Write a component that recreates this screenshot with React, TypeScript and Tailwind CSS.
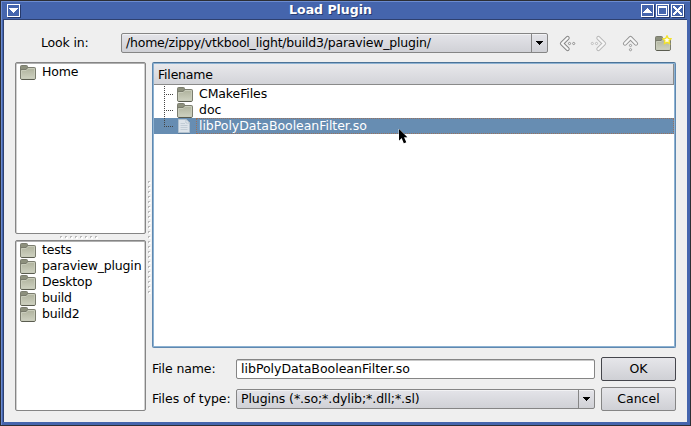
import type { ReactNode } from "react";

function Folder({ id }: { id: string }) {
  return (
    <svg width="16" height="16" viewBox="0 0 16 16" className="block shrink-0">
      <defs>
        <linearGradient id={id} x1="0" y1="0" x2="0" y2="1">
          <stop offset="0" stopColor="#b0b39e" />
          <stop offset="1" stopColor="#cdd0bf" />
        </linearGradient>
      </defs>
      <path d="M.5 14V2.5q0-1 1-1h5q1 0 1 1v1h7q1 0 1 1V14q0 1.4-1 1.4h-13q-1 0-1-1.4z" fill="#8d907d" stroke="#7b7d6f" />
      <path d="M1.5 6.5h4.8l1.5-2h6.7v10h-13z" fill={`url(#${id})`} stroke="#c9ccbb" />
      <path d="M1 5.5h5L7.6 3.5" fill="none" stroke="#747668" strokeWidth=".8" />
      <path d="M1.5 15.5h13" stroke="#5a5c50" />
    </svg>
  );
}

function FileIcon() {
  return (
    <svg width="16" height="16" viewBox="0 0 16 16" className="block shrink-0">
      <path d="M1.5 1.5h7.5l3.5 3.5v9.5h-11z" fill="#dde4ea" stroke="#b3c2cf" />
      <path d="M9 1.5V5h3.5z" fill="#f7f9fa" stroke="#b9c6d0" />
      <path d="M3.5 5.5H8M3.5 7.5h7M3.5 9.5h7M3.5 11.5h7" stroke="#c2cdd6" />
      <path d="M1 15.5h12" stroke="#5b7c9c" />
    </svg>
  );
}

function TitleButton({ children }: { children: ReactNode }) {
  return (
    <svg width="14" height="14" viewBox="0 0 14 14" shapeRendering="crispEdges" className="block">
      <path d="M1 13.5h12.5V1" fill="none" stroke="#26396b" />
      <rect x=".5" y=".5" width="12" height="12" fill="#4565ad" stroke="#fff" />
      {children}
    </svg>
  );
}

function NavArrow({ turn, color }: { turn: string; color: string }) {
  return (
    <svg width="17" height="17" viewBox="0 0 17 17" className={`block ${turn}`}>
      <path d="M8.6 3L3 8.5 8.6 14" fill="none" stroke={color} strokeWidth="4.2" strokeLinecap="round" strokeLinejoin="round" />
      <path d="M8.6 3L3 8.5 8.6 14" fill="none" stroke="#f6f6f6" strokeWidth="2.3" strokeLinecap="round" strokeLinejoin="round" />
      <circle cx="10.5" cy="8.5" r="1.1" fill="#f4f4f4" stroke={color} strokeWidth=".9" />
      <circle cx="14.7" cy="8.5" r="1.1" fill="#f4f4f4" stroke={color} strokeWidth=".9" />
    </svg>
  );
}

function Combo({ children, className }: { children: ReactNode; className: string }) {
  return (
    <div className={`flex h-5 rounded-[2px] border border-[#858585] bg-linear-to-b from-[#e4e4e9] to-[#d0d1d6] shadow-[inset_0_1px_0_#f2f2f4] ${className}`}>
      <span className="flex-1 pl-1 leading-[18px]">{children}</span>
      <span className="flex w-4 items-center justify-center border-l border-[#858585]">
        <svg width="7" height="4" viewBox="0 0 7 4" shapeRendering="crispEdges">
          <path d="M0 0h7v1H6v1H5v1H4v1H3V3H2V2H1V1H0z" />
        </svg>
      </span>
    </div>
  );
}

function Dots({ vertical, count }: { vertical?: boolean; count: number }) {
  return (
    <div className={`flex items-center justify-center gap-[3px] ${vertical ? "flex-col" : ""}`}>
      {Array.from({ length: count }, (_, i) => (
        <i key={i} className="block size-[2px] border-t border-l border-[#b9b9b9] bg-white shadow-[1px_1px_0_#fff]" />
      ))}
    </div>
  );
}

function Place({ name }: { name: string }) {
  return (
    <div className="flex h-4 items-center gap-[6px] whitespace-nowrap">
      <Folder id={`place-${name}`} />
      <span className="tracking-[-0.18px]">{name}</span>
    </div>
  );
}

function Branch({ last, children }: { last?: boolean; children: ReactNode }) {
  return (
    <>
      <svg width="23" height="16" viewBox="0 0 23 16" shapeRendering="crispEdges" className="shrink-0">
        <path d={last ? "M10.5 0v8" : "M10.5 0v16"} stroke="#444" strokeDasharray="1 1" />
        <path d="M10 8.5h10" stroke="#444" strokeDasharray="1 1" />
      </svg>
      {children}
    </>
  );
}

export default function App() {
  return (
    <div className="flex h-[426px] w-[691px] cursor-default flex-col overflow-hidden border border-[#2c2e34] bg-[#4565ad] font-['DejaVu_Sans',sans-serif] text-[12.5px] leading-4 text-black shadow-[inset_1px_1px_0_#6b8bd0]">
      <header className="flex h-[18px] shrink-0 items-center pr-[5px] pl-[6px]">
        <div className="mt-[2px] w-[48px]">
          <TitleButton><path d="M2 4h9v1h-1v1H9v1H8v1H7v1H6V8H5V7H4V6H3V5H2z" fill="#fff" /></TitleButton>
        </div>
        <h1 className="flex-1 pr-[33px] text-center text-[12.5px] leading-[18px] font-bold text-white [text-shadow:1px_1px_0_#273c73]">Load Plugin</h1>
        <div className="mt-[2px] flex w-[46px] justify-end gap-px">
          <TitleButton><path d="M6 4h1v1h1v1h1v1h1v1h1v1H2V8h1V7h1V6h1V5h1z" fill="#fff" /></TitleButton>
          <TitleButton><path d="M2 2h9v9H2zM3 4v6h7V4z" fill="#fff" fillRule="evenodd" /></TitleButton>
          <TitleButton><path d="M2 2h2v1h1v1h1v1h1V4h1V3h1V2h2v2h-1v1H9v1H8v1h1v1h1v1h1v2H9v-1H8V9H7V8H6v1H5v1H4v1H2V9h1V8h1V7h1V6H4V5H3V4H2z" fill="#fff" /></TitleButton>
        </div>
      </header>

      <main className="mr-[3px] mb-[3px] ml-[3px] flex min-h-0 flex-1 flex-col border-t border-[#2e4070] bg-[#efefef] px-[11px] shadow-[-1px_0_0_#2e4070]">
        <div className="flex h-[42px] shrink-0 items-center pt-[4px]">
          <span className="ml-[26px] w-[80px] tracking-[-0.15px]">Look in:</span>
          <Combo className="w-[427px] tracking-[-0.21px]">/home/zippy/vtkbool_light/build3/paraview_plugin/</Combo>
          <div className="ml-[11px] flex items-center">
            <NavArrow turn="" color="#868686" />
            <span className="ml-[14px]"><NavArrow turn="rotate-180" color="#b8b8b8" /></span>
            <span className="ml-[15px]"><NavArrow turn="rotate-90" color="#929292" /></span>
            <span className="relative ml-[16px]">
              <Folder id="new-folder" />
              <svg width="10" height="10" viewBox="0 0 10 10" className="absolute top-0 left-[7px]">
                <path d="M5 .9l1.3 2.5 2.8.4-2 2 .5 2.8L5 7.3 2.4 8.6l.5-2.8-2-2 2.8-.4z" fill="#fffef0" stroke="#f2e22a" strokeWidth="1.3" />
              </svg>
            </span>
          </div>
        </div>

        <div className="grid h-[349px] grid-cols-[131px_6px_524px]">
          <aside className="flex flex-col">
            <div className="h-[172px] rounded-[2px] border border-[#858585] bg-white pt-px pl-1 shadow-[inset_0_1px_0_#b0b0b0,inset_1px_0_0_#d0d0d0,inset_-1px_0_0_#d0d0d0]">
              <Place name="Home" />
            </div>
            <div className="flex h-[6px] items-center justify-center pr-1"><Dots count={8} /></div>
            <div className="flex-1 rounded-[2px] border border-[#858585] bg-white pt-px pl-1 shadow-[inset_0_1px_0_#b0b0b0,inset_1px_0_0_#d0d0d0,inset_-1px_0_0_#d0d0d0]">
              {["tests", "paraview_plugin", "Desktop", "build", "build2"].map((n) => <Place key={n} name={n} />)}
            </div>
          </aside>
          <div className="flex items-center justify-center"><Dots vertical count={23} /></div>
          <section className="flex flex-col">
            <div className="h-[286px] rounded-[2px] border border-[#5f88b0] border-t-[#4c7397] bg-white p-px shadow-[inset_0_0_0_1px_#8db2d2,inset_0_1px_0_1px_#6f97bb]">
              <div className="mb-px h-[21px] border-r border-b border-[#8a8a8a] bg-linear-to-b from-[#e8e8eb] to-[#d3d4d9] pl-1 leading-[21px] tracking-[-0.2px]">Filename</div>
              <div className="flex h-4 items-center"><Branch><Folder id="cmake" /><span className="ml-[6px] tracking-[-0.1px]">CMakeFiles</span></Branch></div>
              <div className="flex h-4 items-center"><Branch><Folder id="doc" /><span className="ml-[6px]">doc</span></Branch></div>
              <div className="relative flex h-4 items-center bg-[#678db2] text-white">
                <Branch last><FileIcon /></Branch>
                <span className="ml-[3px] h-4 flex-1 border border-dotted border-[#98725e] pl-[2px] leading-[14px] tracking-[-0.04px]">libPolyDataBooleanFilter.so</span>
                <svg width="11" height="17" viewBox="-1 -1 11 17" className="absolute top-[10px] left-[244px]">
                  <path d="M0 0v11.5L2.7 9l2.2 5.2 2.3-1L5 8.3h3.3z" stroke="#fff" strokeWidth=".8" />
                  <path d="M0 0v11.5L2.7 9l2.2 5.2 2.3-1L5 8.3h3.3z" />
                </svg>
              </div>
            </div>
            <div className="mt-[9px] grid h-[54px] grid-cols-[84px_359px_75px] items-center gap-x-0 gap-y-[6px]">
              <label className="tracking-[-0.1px]">File name:</label>
              <div className="h-5 rounded-[2px] border border-[#858585] bg-white pl-1 leading-[18px] shadow-[inset_0_1px_0_#c8c8c8]">libPolyDataBooleanFilter.so</div>
              <button className="ml-[6px] h-6 w-[75px] rounded-[2px] border border-[#45464c] bg-linear-to-b from-[#e6e6ea] to-[#cfd0d5]">OK</button>
              <label className="tracking-[-0.07px]">Files of type:</label>
              <Combo className="tracking-[-0.08px]">Plugins (*.so;*.dylib;*.dll;*.sl)</Combo>
              <button className="ml-[6px] h-6 w-[75px] rounded-[2px] border border-[#858585] bg-linear-to-b from-[#e6e6ea] to-[#cfd0d5]">Cancel</button>
            </div>
          </section>
        </div>
      </main>
    </div>
  );
}
